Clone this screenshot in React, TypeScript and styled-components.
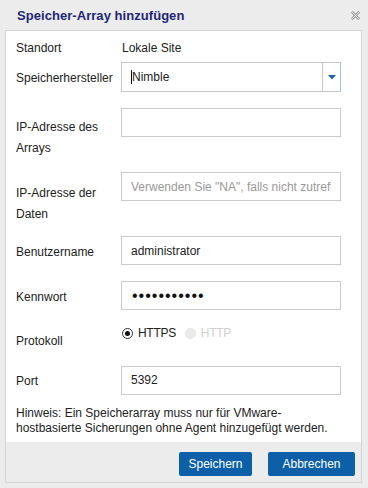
import React from 'react';
import styled, { createGlobalStyle } from 'styled-components';

const GlobalStyle = createGlobalStyle`
  body {
    margin: 0;
    background: #ececec;
    font-family: "Liberation Sans", Arial, sans-serif;
  }
`;

const Dialog = styled.div`
  width: 368px;
  height: 488px;
  background: #ececec;
  display: flex;
  flex-direction: column;
  overflow: hidden;
`;

const Header = styled.div`
  height: 30px;
  display: flex;
  align-items: center;
  justify-content: space-between;
  padding: 0 8px 0 17px;
  box-sizing: border-box;
`;

const Title = styled.h1`
  margin: 0;
  font-size: 13px;
  font-weight: bold;
  color: #1c2878;
  letter-spacing: 0.05px;
`;

const CloseButton = styled.button`
  border: 0;
  background: none;
  padding: 0;
  width: 9px;
  height: 9px;
  display: flex;
  cursor: pointer;
`;

const Panel = styled.div`
  margin-left: 5px;
  width: 357px;
  box-sizing: border-box;
  background: #fff;
  border: 1px solid #d4d4d4;
  display: flex;
  flex-direction: column;
`;

const Form = styled.div`
  padding: 0 0 0 10px;
  display: flex;
  flex-direction: column;
`;

const Row = styled.div<{ $top: number }>`
  display: grid;
  grid-template-columns: 105px 220px;
  align-items: start;
  margin-top: ${(p) => p.$top}px;
`;

const Label = styled.div<{ $pad?: number }>`
  font-size: 12px;
  line-height: 21px;
  color: #222;
  padding-top: ${(p) => p.$pad ?? 0}px;
`;

const Value = styled.div`
  font-size: 12px;
  line-height: 21px;
  color: #222;
  padding-left: 1px;
`;

const TextInput = styled.input`
  width: 220px;
  height: 29px;
  box-sizing: border-box;
  border: 1px solid #cbcbcb;
  padding: 0 9px;
  font-family: "Liberation Sans", Arial, sans-serif;
  font-size: 12px;
  color: #222;
  outline: none;
  &::placeholder {
    color: #9a9a9a;
  }
  &[type='password'] {
    font-size: 16px;
    letter-spacing: 1px;
    padding-left: 10px;
    color: #111;
  }
`;

const Select = styled.div`
  width: 220px;
  height: 30px;
  box-sizing: border-box;
  border: 1px solid #c6c6c6;
  border-right-color: #9dc3e6;
  display: flex;
  align-items: stretch;
`;

const SelectText = styled.div`
  flex: 1;
  display: flex;
  align-items: center;
  padding-left: 9px;
  font-size: 12px;
  color: #222;
`;

const Caret = styled.span`
  width: 1px;
  height: 14px;
  background: #111;
`;

const SelectToggle = styled.div`
  width: 17px;
  border-left: 1px solid #c6c6c6;
  display: flex;
  align-items: center;
  justify-content: center;
`;

const RadioGroup = styled.div`
  display: flex;
  align-items: center;
  height: 20px;
  padding-left: 1px;
`;

const RadioOption = styled.label<{ $disabled?: boolean }>`
  display: flex;
  align-items: center;
  gap: 5px;
  font-size: 12px;
  color: ${(p) => (p.$disabled ? '#cfcfcf' : '#222')};
  margin-right: 9px;
  letter-spacing: -0.3px;
`;

const RadioDot = styled.span<{ $checked?: boolean; $disabled?: boolean }>`
  width: 11px;
  height: 11px;
  border-radius: 50%;
  box-sizing: border-box;
  border: 1px solid ${(p) => (p.$disabled ? '#e3e3e3' : '#333')};
  background: ${(p) => (p.$disabled ? '#ebebeb' : '#fff')};
  display: flex;
  align-items: center;
  justify-content: center;
  &::after {
    content: '';
    width: 5px;
    height: 5px;
    border-radius: 50%;
    background: ${(p) => (p.$checked ? '#111' : 'transparent')};
  }
`;

const Hint = styled.p`
  margin: 11px 0 0 0;
  width: 320px;
  font-size: 12px;
  line-height: 15px;
  color: #222;
`;

const Footer = styled.div`
  margin-top: 6px;
  background: #ececec;
  height: 40px;
  display: flex;
  justify-content: flex-end;
  align-items: flex-start;
  gap: 16px;
  padding: 10px 6px 0 0;
  box-sizing: border-box;
`;

const Button = styled.button<{ $width: number }>`
  width: ${(p) => p.$width}px;
  height: 24px;
  border: 0;
  border-radius: 2px;
  background: #0d60a8;
  color: #fff;
  font-family: "Liberation Sans", Arial, sans-serif;
  font-size: 12px;
  cursor: pointer;
`;

export default function App() {
  return (
    <>
      <GlobalStyle />
      <Dialog>
        <Header>
          <Title>Speicher-Array hinzufügen</Title>
          <CloseButton aria-label="Schließen">
            <svg width="9" height="9" viewBox="0 0 9 9">
              <path d="M0.8 0.8 L8.2 8.2 M8.2 0.8 L0.8 8.2" stroke="#9a9a9a" strokeWidth="2.6" />
              <path d="M0.8 0.8 L8.2 8.2 M8.2 0.8 L0.8 8.2" stroke="#ececec" strokeWidth="0.9" />
            </svg>
          </CloseButton>
        </Header>
        <Panel>
          <Form>
            <Row $top={7}>
              <Label>Standort</Label>
              <Value>Lokale Site</Value>
            </Row>
            <Row $top={3}>
              <Label $pad={6}>Speicherhersteller</Label>
              <Select>
                <SelectText>
                  <Caret />
                  Nimble
                </SelectText>
                <SelectToggle>
                  <svg width="8" height="5" viewBox="0 0 8 5">
                    <path d="M0 0 H8 L4 4.5 Z" fill="#1a64ad" />
                  </svg>
                </SelectToggle>
              </Select>
            </Row>
            <Row $top={16}>
              <Label $pad={9}>IP-Adresse des Arrays</Label>
              <TextInput type="text" />
            </Row>
            <Row $top={13}>
              <Label $pad={11}>IP-Adresse der Daten</Label>
              <TextInput type="text" placeholder={'Verwenden Sie "NA", falls nicht zutreffend'} />
            </Row>
            <Row $top={11}>
              <Label $pad={5.5}>Benutzername</Label>
              <TextInput type="text" defaultValue="administrator" />
            </Row>
            <Row $top={16}>
              <Label $pad={5.5}>Kennwort</Label>
              <TextInput type="password" defaultValue="xxxxxxxxxxx" />
            </Row>
            <Row $top={13}>
              <Label $pad={7.5}>Protokoll</Label>
              <RadioGroup>
                <RadioOption>
                  <RadioDot $checked />
                  HTTPS
                </RadioOption>
                <RadioOption $disabled>
                  <RadioDot $disabled />
                  HTTP
                </RadioOption>
              </RadioGroup>
            </Row>
            <Row $top={14}>
              <Label $pad={5.5}>Port</Label>
              <TextInput type="text" defaultValue="5392" />
            </Row>
            <Hint>
              Hinweis: Ein Speicherarray muss nur für VMware-hostbasierte Sicherungen ohne Agent
              hinzugefügt werden.
            </Hint>
          </Form>
          <Footer>
            <Button $width={73}>Speichern</Button>
            <Button $width={87}>Abbrechen</Button>
          </Footer>
        </Panel>
      </Dialog>
    </>
  );
}
